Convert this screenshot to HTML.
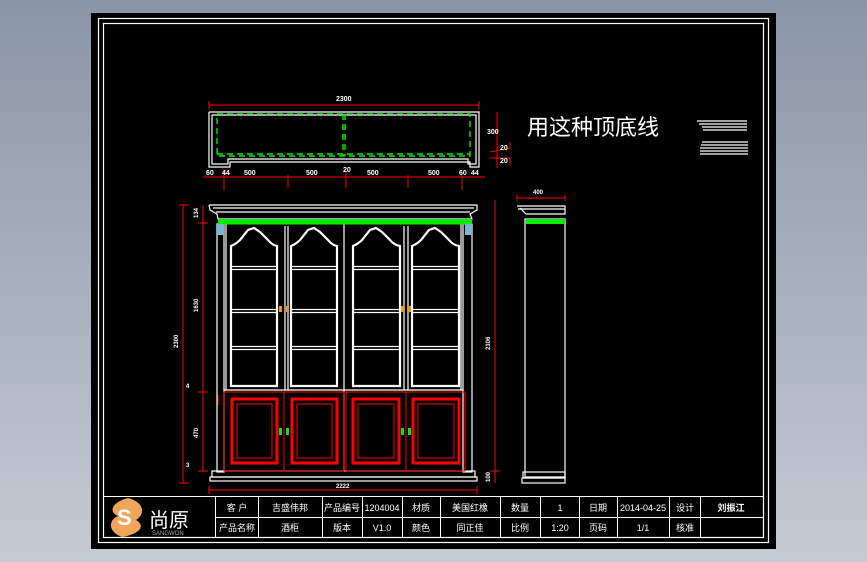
<!DOCTYPE html>
<html><head><meta charset="utf-8"><style>
html,body{margin:0;padding:0;width:867px;height:562px;overflow:hidden;background:linear-gradient(#8996a8,#c6cad2);}
svg{position:absolute;left:0;top:0}
text{font-family:"Liberation Sans","Noto Sans CJK SC",sans-serif;}
</style></head><body>
<svg width="867" height="562" viewBox="0 0 867 562">
<rect x="91" y="13" width="685" height="536" fill="#000"/>
<rect x="98.5" y="18.5" width="670" height="524" fill="none" stroke="#fff" stroke-width="1.2"/>
<rect x="103.5" y="23.5" width="660" height="514" fill="none" stroke="#fff" stroke-width="1.2"/>

<!-- top view -->
<g stroke="#f00" stroke-width="1" fill="none">
<line x1="209" y1="105" x2="479" y2="105"/><line x1="209" y1="101" x2="209" y2="109"/><line x1="479" y1="101" x2="479" y2="109"/>
<line x1="203" y1="177" x2="485" y2="177"/>
<line x1="497" y1="112" x2="497" y2="168"/>
<polyline points="490,152 510,148 510,142"/><polyline points="490,158 510,158 510,166"/>
<line x1="224" y1="170" x2="224" y2="190"/><line x1="288" y1="175" x2="288" y2="188"/><line x1="346" y1="172" x2="346" y2="188"/><line x1="408" y1="175" x2="408" y2="188"/><line x1="462" y1="175" x2="462" y2="190"/>
</g>
<g fill="#fff" font-size="7" font-weight="bold">
<text x="336" y="101">2300</text>
<text x="244" y="175">500</text><text x="306" y="175">500</text><text x="367" y="175">500</text><text x="428" y="175">500</text>
<text x="343" y="172">20</text><text x="206" y="175">60</text><text x="222" y="175">44</text><text x="459" y="175">60</text><text x="471" y="175">44</text>
<text x="487" y="134">300</text><text x="500" y="150">20</text><text x="500" y="163">20</text>
</g>
<g fill="none" stroke="#fff" stroke-width="1.2">
<polyline points="209,112 479,112 479,167 470,167 470,162 230,162 230,167 209,167 209,112"/>
<polyline points="212,115 476,115 476,164 468,164 468,159 228,159 228,164 212,164 212,115"/>
</g>
<g fill="none" stroke="#00ee00" stroke-width="1.4" stroke-dasharray="6,4">
<rect x="217" y="114" width="253" height="42"/><line x1="217" y1="154" x2="470" y2="154"/>
<line x1="343" y1="114" x2="343" y2="156"/><line x1="345" y1="114" x2="345" y2="156"/>
</g>

<!-- front view dims -->
<g stroke="#f00" stroke-width="1" fill="none">
<line x1="183" y1="205" x2="183" y2="483"/><line x1="179" y1="205" x2="189" y2="205"/><line x1="179" y1="483" x2="189" y2="483"/>
<line x1="203" y1="205" x2="203" y2="471"/><line x1="198" y1="223" x2="208" y2="223"/><line x1="198" y1="392" x2="208" y2="392"/><line x1="198" y1="471" x2="208" y2="471"/>
<line x1="495" y1="200" x2="495" y2="483"/><line x1="490" y1="471" x2="500" y2="471"/>
<line x1="209" y1="490" x2="477" y2="490"/><line x1="209" y1="486" x2="209" y2="494"/><line x1="477" y1="486" x2="477" y2="494"/>
<line x1="218" y1="395" x2="218" y2="405"/>
</g>
<g fill="#fff" font-size="6" font-weight="bold">
<text transform="translate(178,348) rotate(-90)">2300</text>
<text transform="translate(198,218) rotate(-90)">134</text>
<text transform="translate(198,312) rotate(-90)">1630</text>
<text transform="translate(198,438) rotate(-90)">470</text>
<text x="186" y="388">4</text><text x="186" y="467">3</text>
<text transform="translate(490,350) rotate(-90)">2106</text>
<text transform="translate(490,482) rotate(-90)">100</text>
<text x="336" y="488">2222</text>
<text x="533" y="194">400</text>
</g>

<!-- cabinet -->
<g fill="none" stroke="#fff" stroke-width="1.2">
<polyline points="209,205 477,205 477,210 470,214 472,219 218,219 217,214 210,210 209,205"/>
<line x1="213" y1="208" x2="474" y2="208"/><line x1="216" y1="212" x2="470" y2="212"/>
<rect x="217" y="224" width="7" height="248"/><rect x="463" y="224" width="9" height="248"/>
<line x1="226" y1="224" x2="226" y2="390"/><line x1="461" y1="224" x2="461" y2="390"/>
<line x1="344" y1="224" x2="344" y2="471"/>
<rect x="212" y="471" width="263" height="6"/><rect x="210" y="477" width="267" height="4"/>
</g>
<rect x="218" y="219" width="254" height="5.5" fill="#00ee00"/>
<rect x="217" y="224" width="7" height="11" fill="#7ab4d4"/><rect x="465" y="224" width="7" height="11" fill="#7ab4d4"/>
<g fill="none" stroke="#fff" stroke-width="2.2">
<path d="M231,386 V246 Q236,244 240,240 L248,230 L254,228 L260,232 L268,240 Q272,245 277,246 V386 Z"/>
<path d="M291,386 V246 Q296,244 300,240 L308,230 L314,228 L320,232 L328,240 Q332,245 337,246 V386 Z"/>
<path d="M353,386 V246 Q358,244 362,240 L370,230 L376,228 L382,232 L390,240 Q394,245 400,246 V386 Z"/>
<path d="M412,386 V246 Q417,244 421,240 L429,230 L435,228 L441,232 L449,240 Q453,245 459,246 V386 Z"/>
</g>
<g stroke="#fff" stroke-width="1.2">
<path d="M231,266.5H277M231,269.5H277M231,309.5H277M231,312.5H277M231,346.5H277M231,349.5H277"/>
<path d="M291,266.5H337M291,269.5H337M291,309.5H337M291,312.5H337M291,346.5H337M291,349.5H337"/>
<path d="M353,266.5H400M353,269.5H400M353,309.5H400M353,312.5H400M353,346.5H400M353,349.5H400"/>
<path d="M412,266.5H459M412,269.5H459M412,309.5H459M412,312.5H459M412,346.5H459M412,349.5H459"/>
<line x1="224" y1="390" x2="463" y2="390"/>
<line x1="285" y1="226" x2="285" y2="390"/><line x1="288" y1="226" x2="288" y2="390"/>
<line x1="404" y1="226" x2="404" y2="390"/><line x1="408" y1="226" x2="408" y2="390"/>
</g>
<g fill="none" stroke="#f00" stroke-width="1">
<rect x="224" y="392" width="120" height="79"/><rect x="346" y="392" width="119" height="79"/>
<line x1="284" y1="392" x2="284" y2="471"/><line x1="406" y1="392" x2="406" y2="471"/>
</g>
<g fill="none" stroke="#f00" stroke-width="3">
<rect x="232" y="399" width="45" height="64"/><rect x="292" y="399" width="45" height="64"/>
<rect x="353" y="399" width="46" height="64"/><rect x="413" y="399" width="46" height="64"/>
</g>
<g fill="none" stroke="#f00" stroke-width="1">
<rect x="237" y="404" width="35" height="54"/><rect x="297" y="404" width="35" height="54"/>
<rect x="358" y="404" width="36" height="54"/><rect x="418" y="404" width="36" height="54"/>
</g>
<g fill="#f7941d"><rect x="279" y="306" width="3" height="6"/><rect x="286" y="306" width="3" height="6"/><rect x="401" y="306" width="3" height="6"/><rect x="408" y="306" width="3" height="6"/></g>
<g fill="#00ee00"><rect x="279" y="428" width="3" height="7"/><rect x="286" y="428" width="3" height="7"/><rect x="401" y="428" width="3" height="7"/><rect x="408" y="428" width="3" height="7"/></g>

<!-- side view -->
<g stroke="#f00" fill="none"><line x1="517" y1="198" x2="565" y2="198"/><line x1="517" y1="195" x2="517" y2="201"/><line x1="565" y1="195" x2="565" y2="201"/></g>
<g fill="none" stroke="#fff" stroke-width="1.2">
<polyline points="517,206 565,206 565,214 526,214 520,208"/><line x1="518" y1="209" x2="565" y2="209"/>
<rect x="525" y="219" width="40" height="258"/>
<rect x="523" y="472" width="42" height="6"/><rect x="522" y="478" width="43" height="5"/>
</g>
<rect x="526" y="219" width="39" height="5" fill="#00ee00"/>
<text x="527" y="135" fill="#fff" font-size="22" font-family="Noto Sans CJK SC,sans-serif">用这种顶底线</text>
<g fill="none" stroke="#fff" stroke-width="1.3">
<path d="M697,121H747M699,124H747M702,127H747M703,130H747"/>
<path d="M702,142H748M701,145H748M700,148H748M700,151H748M700,154H748"/>
</g>

<!-- title block -->
<g stroke="#fff" stroke-width="1" fill="none">
<rect x="103.5" y="496.5" width="660" height="41"/>
<line x1="215" y1="517.5" x2="763" y2="517.5"/>
<path d="M215.5,496V538M258.5,496V538M322.5,496V538M362.5,496V538M402.5,496V538M440.5,496V538M500.5,496V538M540.5,496V538M579.5,496V538M617.5,496V538M669.5,496V538M700.5,496V538"/>
</g>
<g fill="#fff" font-size="9" text-anchor="middle">
<text x="237" y="511">客 户</text><text x="290" y="511">吉盛伟邦</text><text x="342" y="511">产品编号</text><text x="382" y="511">1204004</text><text x="421" y="511">材质</text><text x="470" y="511">美国红橡</text><text x="520" y="511">数量</text><text x="560" y="511">1</text><text x="598" y="511">日期</text><text x="643" y="511">2014-04-25</text><text x="685" y="511">设计</text><text x="731" y="511" font-weight="bold">刘振江</text>
<text x="237" y="531">产品名称</text><text x="290" y="531">酒柜</text><text x="342" y="531">版本</text><text x="382" y="531">V1.0</text><text x="421" y="531">颜色</text><text x="470" y="531">同正佳</text><text x="520" y="531">比例</text><text x="560" y="531">1:20</text><text x="598" y="531">页码</text><text x="643" y="531">1/1</text><text x="685" y="531">核准</text>
</g>
<path d="M128,498 C112,502 108,512 118,516 C108,520 108,532 122,537 C140,534 146,526 136,520 C146,514 144,502 128,498Z" fill="#f2a55a"/>
<text x="117" y="525" fill="#fff" font-size="22" font-weight="bold">S</text>
<text x="149" y="527" fill="#fff" font-size="20" font-family="Noto Sans CJK SC,sans-serif">尚原</text>
<text x="152" y="535" fill="#aaa" font-size="6">SANGWON</text>
</svg>
</body></html>
